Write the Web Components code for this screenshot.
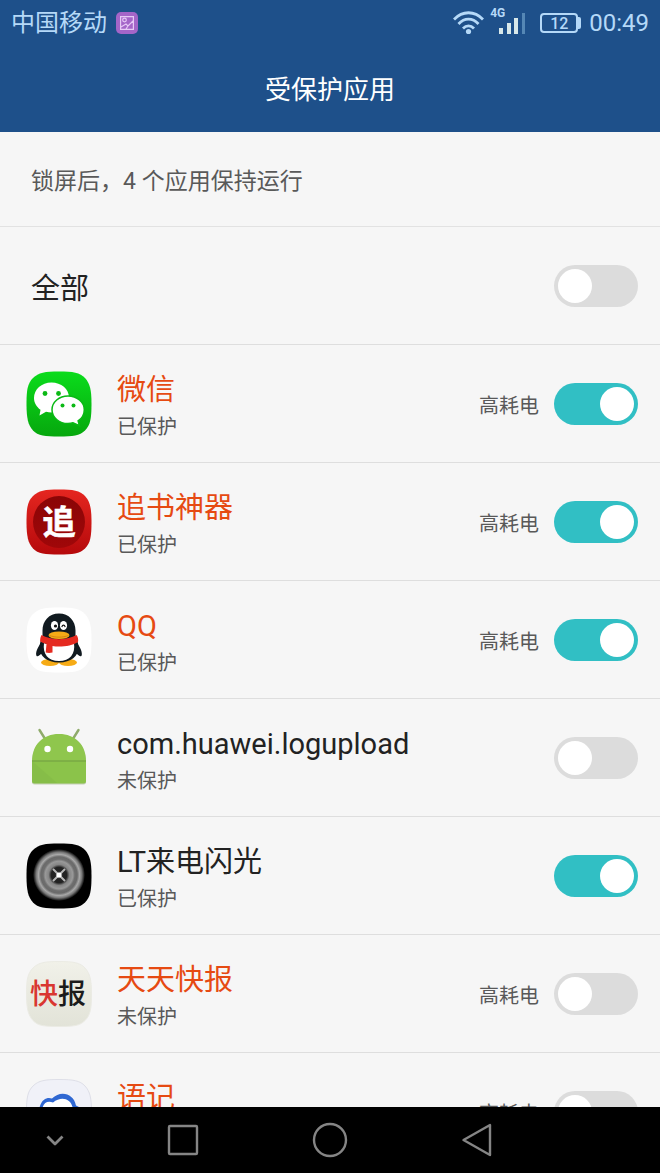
<!DOCTYPE html>
<html lang="zh-CN">
<head>
<meta charset="utf-8">
<meta name="viewport" content="width=device-width, initial-scale=1">
<title>受保护应用</title>
<style>
  html, body { height: 100%; margin: 0; }
  body { font-family: Roboto, "Noto Sans CJK SC", sans-serif; background: #f6f6f6; color: #222; }
</style>
</head>
<body>
<phone-screen>
  <status-bar slot="top" carrier="中国移动" battery="12" time="00:49"></status-bar>
  <title-bar slot="top">受保护应用</title-bar>
  <summary-row>锁屏后，4 个应用保持运行</summary-row>
  <app-row plain>全部</app-row>
  <app-row hot on note="高耗电" state="已保护"><app-icon slot="icon" name="wechat"></app-icon>微信</app-row>
  <app-row hot on note="高耗电" state="已保护"><app-icon slot="icon" name="reader"></app-icon>追书神器</app-row>
  <app-row hot on note="高耗电" state="已保护"><app-icon slot="icon" name="qq"></app-icon>QQ</app-row>
  <app-row state="未保护"><app-icon slot="icon" name="android"></app-icon>com.huawei.logupload</app-row>
  <app-row on state="已保护"><app-icon slot="icon" name="flash"></app-icon>LT来电闪光</app-row>
  <app-row hot note="高耗电" state="未保护"><app-icon slot="icon" name="news"></app-icon>天天快报</app-row>
  <app-row hot note="高耗电" state="未保护"><app-icon slot="icon" name="cloud"></app-icon>语记</app-row>
  <nav-bar slot="bottom"></nav-bar>
</phone-screen>

<script>
/* Rounded tile behind the app icons. */
const TILE = "M33 .5C47 .5 54 1.500 59 7S65.500 19 65.500 33 64.500 54 59 59.500 47 65.500 33 65.500 12 65 7 59.500.5 47 .5 33 1.500 12.500 7 7 19 .5 33 .5z";

const ICONS = {
  wechat: `
    <defs><linearGradient id="g" x1="0" y1="0" x2="0" y2="1"><stop offset="0" stop-color="#0bdc1c"/><stop offset="1" stop-color="#06a70d"/></linearGradient></defs>
    <path d="${TILE}" fill="url(#g)"/>
    <path fill="#fff" d="M25.500 11.500C15.500 11.500 8 18.500 8 27c0 4.800 2.500 8.800 6.500 11.800L13.500 44.500l6.500-3.800c1.900.6 3.500.8 5.500.8 9.700 0 17.500-6.500 17.500-15S35.200 11.500 25.500 11.500z"/>
    <path fill="#fff" stroke="#09b914" stroke-width="1.500" d="M42 25c-8.900 0-16 6.100-16 13.700S33.100 52.500 42 52.500c1.800 0 3.500-.2 5-.7l6.500 3-1.400-4.900c3.800-2.500 6.200-6.500 6.200-11.200C58.300 31.100 50.900 25 42 25z"/>
    <g fill="#0bb915"><circle cx="19" cy="22.500" r="2.400"/><circle cx="32.500" cy="22.500" r="2.400"/><circle cx="36.500" cy="34.500" r="2"/><circle cx="47.500" cy="34.500" r="2"/></g>`,
  reader: `
    <defs><linearGradient id="g" x1="0" y1="0" x2="0" y2="1"><stop offset="0" stop-color="#e52620"/><stop offset="1" stop-color="#b5090b"/></linearGradient>
    <linearGradient id="h" x1="0" y1="0" x2="0" y2="1"><stop offset="0" stop-color="#8a0506"/><stop offset="1" stop-color="#a00709"/></linearGradient></defs>
    <path d="${TILE}" fill="url(#g)"/>
    <circle cx="33" cy="33" r="26" fill="url(#h)"/>
    <text x="33" y="45" text-anchor="middle" font-family="Noto Sans CJK SC, sans-serif" font-weight="700" font-size="33" fill="#fff" stroke="#fff" stroke-width=".6">追</text>`,
  qq: `
    <path d="${TILE}" fill="#fff"/>
    <path fill="#111a20" d="M16 35c-3 3-6.500 9-5.800 13 .5 2.400 2.800 1.300 6-2.200M50 35c3 3 6.500 9 5.800 13-.5 2.400-2.800 1.300-6-2.200"/>
    <ellipse cx="24" cy="55.500" rx="9" ry="3.500" fill="#f6ab16"/><ellipse cx="42" cy="55.500" rx="9" ry="3.500" fill="#f6ab16"/>
    <path fill="#111a20" d="M33 6.500c-10 0-16.500 7.500-16.500 17v6c-2 4-3 8-3 11C13.500 49 21 55.500 33 55.500s19.500-6.500 19.500-15c0-3-1-7-3-11v-6c0-9.500-6.500-17-16.500-17z"/>
    <path fill="#fff" d="M18 36c-1.500 11 4 18 15 18s16.500-7 15-18c-8 4-22 4-30 0z"/>
    <path fill="#e52a20" d="M15.500 28c9 5.500 26 5.500 35 0 1.500 2 2 4.500 1.500 7-6 4-18 5.600-25.500 4v6.500c-2.500.7-5 .5-6.800 0l.8-8.500c-2.200-.6-4.500-1.500-6.300-2.500-.2-2.500.3-4.500 1.300-6.500z"/>
    <ellipse cx="28.500" cy="18.500" rx="3.600" ry="4.600" fill="#fff"/><ellipse cx="37.500" cy="18.500" rx="3.600" ry="4.600" fill="#fff"/>
    <circle cx="29.500" cy="19" r="1.600" fill="#111"/><path d="M35.800 20c.8-2.400 2.600-2.400 3.400 0" fill="none" stroke="#111" stroke-width="1.200"/>
    <ellipse cx="33" cy="28.200" rx="10.500" ry="3.800" fill="#f6ab16"/>
    <path d="M23.500 28.500c6 2.200 13 2.200 19 0" fill="none" stroke="#ca7d10" stroke-width=".8"/>`,
  android: `
    <path d="m13.500 5 5 8M47.500 13l5-8" stroke="#8fab6b" stroke-width="2.400" stroke-linecap="round"/>
    <path d="M6 37C6 20 17 9.500 33 9.500S60 20 60 37v20q0 2.500-2.500 2.500h-49Q6 59.500 6 57z" fill="#a3b48d" opacity=".6"/>
    <path d="M6 36.500C6 19.500 17 9 33 9s27 10.500 27 27.500z" fill="#8fc64d"/>
    <path d="M6 36h54v20q0 2.500-2.500 2.500h-49Q6 58.500 6 56z" fill="#8bc34a"/>
    <path d="m7 37 24 21h-22q-3 0-3-2.500V37z" fill="#82b745" opacity=".5"/>
    <path d="M6 36h54" stroke="#79a944" stroke-width="1.400"/>
    <circle cx="21.500" cy="24" r="3.200" fill="#fff"/><circle cx="44" cy="24" r="3.200" fill="#fff"/>`,
  flash: `
    <defs><radialGradient id="g"><stop offset="0" stop-color="#777"/><stop offset=".15" stop-color="#222"/><stop offset=".3" stop-color="#222"/><stop offset=".4" stop-color="#858585"/><stop offset=".53" stop-color="#999"/><stop offset=".61" stop-color="#6e6e6e"/><stop offset=".7" stop-color="#6a6a6a"/><stop offset=".79" stop-color="#a8a8a8"/><stop offset=".88" stop-color="#777"/><stop offset="1" stop-color="#000"/></radialGradient></defs>
    <path d="${TILE}" fill="#000"/>
    <circle cx="33" cy="32" r="26" fill="url(#g)"/>
    <path d="m27 26 12 12M39 26 27 38" stroke="#b5b5b5" stroke-width="2"/><circle cx="33" cy="32" r="2.600" fill="#fff"/>`,
  news: `
    <defs><linearGradient id="g" x1="0" y1="0" x2="0" y2="1"><stop offset="0" stop-color="#f1f1e9"/><stop offset="1" stop-color="#e2e3d8"/></linearGradient></defs>
    <path d="${TILE}" fill="url(#g)" stroke="#ebebe4"/>
    <g font-family="Noto Sans CJK SC, sans-serif" font-weight="500" font-size="28"><text x="4" y="43" fill="#d93630">快</text><text x="32" y="43" fill="#1b1b1b">报</text></g>`,
  cloud: `
    <path d="${TILE}" fill="#f0f1f8" stroke="#dedfe8"/>
    <path d="M14 30C16 21 22 19 27 21C34 12 47 16 49 28L54 31V46H14z" fill="#fff"/>
    <path d="M13 31C15 19 22 18 26 19.500C35 10.500 48 15 50 26.500L55 29V32H47C47 20 36 16 27 23.500C21 21.500 17 24 16 31z" fill="#2f67d2"/>`
};

/* Registers an element whose shadow root is filled by render(el). */
function define(name, css, render, ready) {
  customElements.define(name, class extends HTMLElement {
    connectedCallback() {
      if (this.shadowRoot) return;
      const root = this.attachShadow({ mode: "open" });
      root.innerHTML = `<style>*{box-sizing:border-box}${css}</style>${render(this)}`;
      if (ready) ready(root, this);
    }
  });
}

define("phone-screen", `
  :host { display: flex; flex-direction: column; height: 100vh; overflow: hidden; }
  header, footer { flex: none; }
  main { flex: 1; min-height: 0; overflow: hidden; }`,
  () => `<header><slot name="top"></slot></header><main><slot></slot></main><footer><slot name="bottom"></slot></footer>`);

define("status-bar", `
  :host { display: flex; align-items: center; justify-content: space-between; height: 46px; padding: 0 11px; background: #1e508a; color: #b5d9f8; font-size: 24px; line-height: 28px; box-sizing: border-box; }
  .side { display: flex; align-items: center; }
  .side svg { display: block; }
  .left { gap: 9px; }
  .signal { position: relative; width: 36px; height: 28px; margin: 0 14px 0 6px; }
  .signal span { position: absolute; left: 0; top: -3px; font-size: 12px; line-height: 14px; font-weight: 700; }
  .battery { width: 38px; height: 20px; border: 2px solid; border-radius: 4px; font-size: 16px; line-height: 17px; text-align: center; font-weight: 500; }
  .tip { width: 3px; height: 12px; margin-right: 8px; background: currentColor; border-radius: 0 2px 2px 0; }`,
  el => `
  <div class="side left"><span>${el.getAttribute("carrier")}</span>
    <svg width="22" height="22" viewBox="0 0 22 22"><rect width="22" height="22" rx="5" fill="#a465c8"/><g fill="none" stroke="#e6c9f5" stroke-width="1.200"><path d="M4.600 4.600h12.800v12.800H4.600zM5 15l5-3 2 2 5-5M10 17l2-3"/><circle cx="8.500" cy="8" r="1.800"/></g></svg>
  </div>
  <div class="side">
    <svg width="31" height="24" viewBox="0 0 31 24" fill="none" stroke="currentColor" stroke-width="2.800"><path d="M1 8.500c8.500-9 20.500-9 29 0M5.500 13c6-6.500 14-6.500 20 0M10 17.500c3.300-3.400 7.700-3.400 11 0"/><circle cx="15.500" cy="20.500" r="2.600" fill="currentColor" stroke="none"/></svg>
    <div class="signal"><span>4G</span>
      <svg width="36" height="28" viewBox="0 0 36 28"><path fill="#d8e8ea" d="M9 19h4v6H9zM17 14h4v11h-4zM24 9h4v16h-4z"/><path fill="#5587b5" d="M32 4h3v21h-3z"/></svg></div>
    <div class="battery">${el.getAttribute("battery")}</div><div class="tip"></div>
    <time>${el.getAttribute("time")}</time>
  </div>`);

define("title-bar", `
  :host { display: flex; align-items: center; justify-content: center; height: 86px; padding-top: 2px; background: #1e508a; color: #fff; box-sizing: border-box; }
  h1 { margin: 0; font-size: 26px; line-height: 36px; font-weight: 400; }`,
  () => `<h1><slot></slot></h1>`);

define("summary-row", `
  :host { display: flex; align-items: center; height: 95px; padding: 6px 31px 0; border-bottom: 1px solid #e2e2e2; box-sizing: border-box; }
  p { margin: 0; font-size: 23px; line-height: 32px; color: #595959; }`,
  () => `<p><slot></slot></p>`);

define("toggle-switch", `
  :host { display: block; flex: none; }
  input { appearance: none; display: flex; align-items: center; width: 84px; height: 42px; margin: 0; padding: 4px; border-radius: 21px; background: #dcdcdc; }
  input::before { content: ""; width: 34px; height: 34px; border-radius: 50%; background: #fff; }
  input:checked { background: #31bfc4; justify-content: flex-end; }`,
  el => `<input type="checkbox" role="switch" aria-label="${el.getAttribute("label")}" ${el.hasAttribute("on") ? "checked" : ""}>`,
  (root, el) => { el.toggle = () => root.querySelector("input").click(); });

define("app-icon", `
  :host { display: block; width: 66px; height: 66px; }
  svg { display: block; }`,
  el => `<svg width="66" height="66" viewBox="0 0 66 66" fill="none" aria-hidden="true">${ICONS[el.getAttribute("name")]}</svg>`);

define("app-row", `
  :host { display: flex; align-items: center; height: 118px; padding: 0 22px 0 26px; border-bottom: 1px solid #dedede; box-sizing: border-box; }
  :host([plain]) { padding-left: 31px; }
  .text { flex: 1; min-width: 0; margin-left: 25px; }
  :host([plain]) .text { margin-left: 0; padding-top: 6px; }
  .name { display: block; font-size: 29px; line-height: 46px; color: #222; }
  :host([hot]) .name { color: #e64a12; }
  .state, .note { font-size: 20px; line-height: 28px; color: #595959; }
  .state { display: block; }
  .note { margin-right: 15px; padding-top: 4px; }`,
  el => {
    const state = el.getAttribute("state"), note = el.getAttribute("note");
    return `<slot name="icon"></slot>
    <div class="text"><label class="name"><slot></slot></label>${state ? `<span class="state">${state}</span>` : ""}</div>
    ${note ? `<span class="note">${note}</span>` : ""}
    <toggle-switch label="${el.textContent.trim()}" ${el.hasAttribute("on") ? "on" : ""}></toggle-switch>`;
  },
  root => root.querySelector("label").addEventListener("click", () => root.querySelector("toggle-switch").toggle()));

define("nav-bar", `
  :host { display: grid; grid-template-columns: 3fr 4fr 4fr 4fr 3fr; height: 66px; background: #000; }
  button { display: flex; align-items: center; justify-content: center; margin: 0; padding: 0; border: 0; background: none; color: #858585; }
  svg { display: block; fill: none; stroke: currentColor; stroke-width: 2.400; stroke-linejoin: round; }`,
  () => `
  <button aria-label="收起"><svg width="36" height="36" viewBox="0 0 36 36"><path d="m10.500 14.500 7.500 7.500 7.500-7.500" stroke-width="2.800"/></svg></button>
  <button aria-label="最近任务"><svg width="36" height="36" viewBox="0 0 36 36"><rect x="4" y="4" width="28" height="28" rx="1"/></svg></button>
  <button aria-label="主页"><svg width="36" height="36" viewBox="0 0 36 36"><circle cx="18" cy="18" r="16"/></svg></button>
  <button aria-label="返回"><svg width="36" height="36" viewBox="0 0 36 36"><path d="M4.500 18 31 3v30z"/></svg></button>`);
</script>
</body>
</html>
